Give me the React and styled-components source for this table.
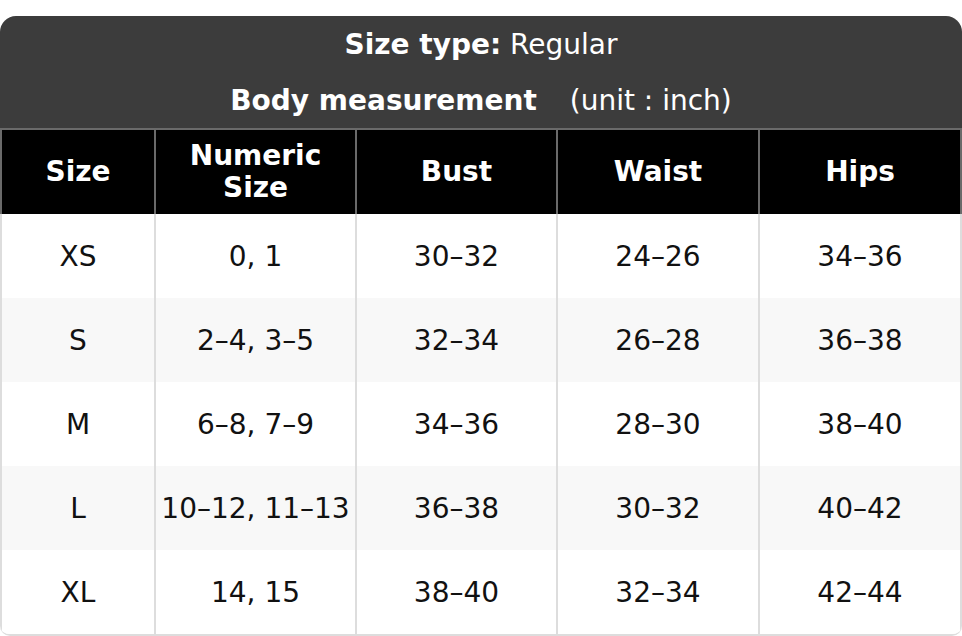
import React from "react";
import styled, { createGlobalStyle } from "styled-components";

const GlobalStyle = createGlobalStyle`
  html, body { margin: 0; padding: 0; background: #ffffff; }
  body { font-family: "DejaVu Sans", "Liberation Sans", sans-serif; }
  * { box-sizing: border-box; }
`;

const Page = styled.div`
  padding-top: 16px;
  width: 962px;
`;

const Chart = styled.div`
  width: 962px;
  border-radius: 16px 16px 10px 10px;
  overflow: hidden;
  border-bottom: 2px solid #dddddd;
`;

const Caption = styled.div`
  background: #3c3c3c;
  color: #ffffff;
  border-bottom: 2px solid #6a6a6a;
  display: flex;
  flex-direction: column;
`;

const CaptionLine = styled.div`
  height: 56px;
  display: flex;
  align-items: center;
  justify-content: center;
  font-size: 28px;
  white-space: pre;
`;

const Strong = styled.strong`
  font-weight: 700;
`;

const Unit = styled.span`
  margin-left: ${(p) => p.$gap || 0}px;
`;

const Grid = styled.div`
  display: grid;
  grid-template-columns: 154px 201px 201px 202px 1fr;
`;

const HeadCell = styled.div`
  height: 84px;
  background: #000000;
  color: #ffffff;
  font-weight: 700;
  font-size: 28px;
  line-height: 1.15;
  display: flex;
  align-items: center;
  justify-content: center;
  text-align: center;
  padding: 0 14px;
  border-left: 2px solid #6a6a6a;
  border-right: ${(p) => (p.$last ? "2px solid #6a6a6a" : "none")};
`;

const Cell = styled.div`
  height: 84px;
  background: ${(p) => (p.$alt ? "#f8f8f8" : "#ffffff")};
  color: #111111;
  font-size: 28px;
  display: flex;
  align-items: center;
  justify-content: center;
  text-align: center;
  white-space: nowrap;
  border-left: 2px solid #dddddd;
  border-right: ${(p) => (p.$last ? "2px solid #dddddd" : "none")};
`;

const headers = ["Size", "Numeric Size", "Bust", "Waist", "Hips"];

const rows = [
  ["XS", "0, 1", "30–32", "24–26", "34–36"],
  ["S", "2–4, 3–5", "32–34", "26–28", "36–38"],
  ["M", "6–8, 7–9", "34–36", "28–30", "38–40"],
  ["L", "10–12, 11–13", "36–38", "30–32", "40–42"],
  ["XL", "14, 15", "38–40", "32–34", "42–44"],
];

export default function App() {
  return (
    <>
      <GlobalStyle />
      <Page>
        <Chart>
          <Caption>
            <CaptionLine>
              <Strong>Size type:</Strong> Regular
            </CaptionLine>
            <CaptionLine>
              <Strong>Body measurement</Strong>
              <Unit $gap={33}>(unit : inch)</Unit>
            </CaptionLine>
          </Caption>
          <Grid>
            {headers.map((h, i) => (
              <HeadCell key={h} $last={i === headers.length - 1}>
                {h}
              </HeadCell>
            ))}
            {rows.map((r, ri) =>
              r.map((c, ci) => (
                <Cell key={`${ri}-${ci}`} $alt={ri % 2 === 1} $last={ci === r.length - 1}>
                  {c}
                </Cell>
              ))
            )}
          </Grid>
        </Chart>
      </Page>
    </>
  );
}
